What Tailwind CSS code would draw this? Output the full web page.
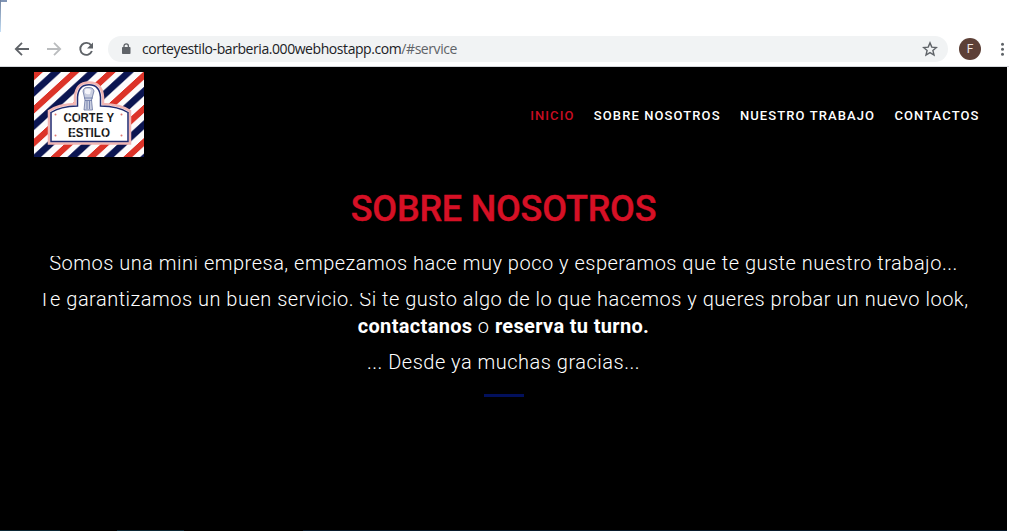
<!DOCTYPE html>
<html lang="es">
<head>
<meta charset="utf-8">
<title>Corte y Estilo</title>
<script src="https://cdn.jsdelivr.net/npm/@tailwindcss/browser@4"></script>
</head>
<body class="relative flex h-[531px] w-[1009px] flex-col overflow-hidden bg-white font-['Roboto',sans-serif]">
<div class="absolute left-0 top-0 h-[2px] w-[7px] bg-[#8094b4]"></div>
<div class="absolute left-0 top-0 h-8 w-px bg-linear-to-b from-[#7183a0] to-[#c4def5]"></div>
<div class="h-[35px] shrink-0"></div>
<div class="flex h-[32px] shrink-0 items-start border-b border-[#d5d8dc] pl-3">
  <svg class="mt-[4px] h-5 w-5 shrink-0" viewBox="0 0 20 20" fill="none" stroke="#5f6368" stroke-width="1.8"><path d="M17 10H4M10 3.8 3.8 10l6.2 6.2"/></svg>
  <svg class="ml-3 mt-[4px] h-5 w-5 shrink-0" viewBox="0 0 20 20" fill="none" stroke="#babcbe" stroke-width="1.8"><path d="M3 10h13M10 3.8l6.2 6.2-6.2 6.2"/></svg>
  <svg class="ml-3 mt-[4px] h-5 w-5 shrink-0" viewBox="0 0 20 20"><path d="M15.2 6.4A6 6 0 1 0 15.9 12" fill="none" stroke="#5f6368" stroke-width="1.9"/><path d="M17 3.5v6h-6z" fill="#5f6368"/></svg>
  <div class="ml-3 mt-px flex h-[26px] w-[840px] items-center rounded-full bg-[#f1f3f4] pl-[13px] pr-[10px]">
    <svg class="h-3 w-[10px] shrink-0" viewBox="0 0 10 12"><rect x="1" y="4" width="8.5" height="7" rx=".8" fill="#5f6368"/><path d="M3 4V3a2.2 2.2 0 0 1 4.4 0v1" fill="none" stroke="#5f6368" stroke-width="1.3"/></svg>
    <span class="ml-[11px] whitespace-nowrap font-['Open_Sans',sans-serif] text-[14px] leading-[26px] tracking-[-0.43px] text-[#202124]">corteyestilo-barberia.000webhostapp.com<span class="text-[#5f6368]">/#service</span></span>
    <svg class="ml-auto h-4 w-4 shrink-0" viewBox="0 0 16 16" fill="none" stroke="#5f6368" stroke-width="1.4"><path d="m8 1.9 1.8 4.2 4.6.4-3.5 3 1.1 4.5L8 11.6 4 14l1.1-4.5-3.5-3 4.6-.4z"/></svg>
  </div>
  <div class="ml-[11px] mt-[3px] flex h-[22px] w-[22px] items-center justify-center rounded-full bg-[#5d4037] text-[12px] text-[#eee5e2]">F</div>
  <svg class="ml-[14px] mt-[6px] h-4 w-[10px] shrink-0" viewBox="0 0 10 16" fill="#5f6368"><circle cx="7.500" cy="3.3" r="1.5"/><circle cx="7.500" cy="8.3" r="1.5"/><circle cx="7.500" cy="13.3" r="1.5"/></svg>
</div>
<main class="flex w-[1007px] flex-1 flex-col bg-black text-white">
  <header class="flex h-[90px] shrink-0 items-start pl-[34px] pt-[5px]">
    <svg class="h-[85px] w-[110px] shrink-0" viewBox="0 0 110 85">
      <defs>
        <pattern id="stripes" width="36.4" height="170" patternUnits="userSpaceOnUse" patternTransform="skewX(-47.500)">
          <rect width="36.4" height="170" fill="#fdfcfc"/>
          <rect width="9" height="170" fill="#dc3328"/>
          <rect x="17" width="10" height="170" fill="#0b1551"/>
        </pattern>
      </defs>
      <rect width="110" height="85" fill="url(#stripes)"/>
      <path d="M15 71.500V39Q24 32.500 41 32V25Q42 10.500 55 10.500Q68 10.500 69 25V32Q87 32.500 96 39V71.500Z" fill="#fff" stroke="#f1b5b3" stroke-width="2.500"/>
      <path d="M17 69.500V40.500Q26 34.500 43.500 34V25Q44.500 12.800 55 12.800Q65.500 12.800 66.500 25V34Q85 34.500 94 40.500V69.500Z" fill="#fff" stroke="#202a70" stroke-width="1.500"/>
      <path d="M49 19Q50 15 54 15.500Q59 15 60 19L57.500 28 58.500 38H50L51 28Z" fill="#c9cee0" stroke="#67739f" stroke-width=".8"/>
      <path d="M51 17.500Q54 16 57 18L56 22Q53 23 51 21Z" fill="#f4f4fa"/>
      <path d="M50 26H59M51 28.500H58M53 29V37M55.500 29V37" stroke="#6673a3" stroke-width=".8"/>
      <g fill="#df7770"><circle cx="21.500" cy="42.500" r="1"/><circle cx="87.500" cy="42.500" r="1"/><circle cx="21.500" cy="63.500" r="1"/><circle cx="87.500" cy="63.500" r="1"/></g>
      <g fill="#1c1c1c" font-family="Liberation Sans" font-weight="700" font-size="12.500">
        <text x="29.500" y="50.300" textLength="50.500" lengthAdjust="spacingAndGlyphs">CORTE Y</text>
        <text x="34" y="65.300" textLength="42" lengthAdjust="spacingAndGlyphs">ESTILO</text>
      </g>
      <path d="M34 39v13M44 39v13M62 39v13M38 54v13M55 54v13M71 54v13" stroke="#fff" stroke-width=".8"/>
    </svg>
    <nav class="ml-auto mr-[27.500px] mt-[35px] flex gap-[19.300px] whitespace-nowrap text-[13px] font-medium leading-[18px] tracking-[1.100px]">
      <a class="text-[#c90d22]">INICIO</a><a>SOBRE NOSOTROS</a><a>NUESTRO TRABAJO</a><a>CONTACTOS</a>
    </nav>
  </header>
  <section class="flex flex-col items-center whitespace-nowrap text-center text-[20px] font-light leading-[27px] tracking-[0.5px]">
    <h2 class="mt-[30px] text-[36px] font-medium leading-[44px] tracking-[-0.22px] text-[#d61025] [-webkit-text-stroke:0.4px_#d61025]">SOBRE NOSOTROS</h2>
    <p class="mt-[19px] [clip-path:inset(6px_0_0_0)]">Somos una mini empresa, empezamos hace muy poco y esperamos que te guste nuestro trabajo...</p>
    <p class="mt-[9px]"><span class="inline-block [clip-path:inset(7px_0_0_0)]">T</span><span class="-ml-[0.900px]">e</span> garantizamos un buen servicio. <span class="inline-block [clip-path:inset(7px_0_0_0)]">S</span>i te gusto algo de lo que hacemos y queres probar un nuevo look,<br><strong class="font-bold tracking-[0.33px]">contactanos</strong> o <strong class="font-bold tracking-[0.33px]">reserva tu turno.</strong></p>
    <p class="mt-[9px]">... Desde ya muchas gracias...</p>
    <div class="mt-[18px] h-[3px] w-10 bg-[#02105c]"></div>
  </section>
  <div class="mt-auto flex h-px"><div class="w-[60px] bg-[#0b2634]"></div><div class="ml-[57px] w-[67px] bg-[#0b2634]"></div><div class="ml-[119px] flex-1 bg-[#08192a]"></div></div>
</main>
</body>
</html>
